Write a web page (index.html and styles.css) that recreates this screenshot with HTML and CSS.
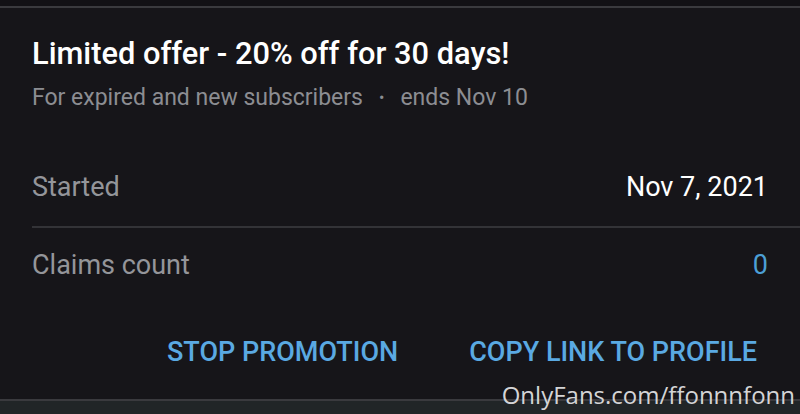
FILE: index.html
```html
<!DOCTYPE html>
<html>
<head>
<meta charset="utf-8">
<link rel="stylesheet" href="styles.css">
</head>
<body>
<div class="page">
  <div class="topband"></div>
  <div class="card">
    <div class="header">
      <h1 class="title">Limited offer - 20% off for 30 days!</h1>
      <div class="subtitle"><span>For expired and new subscribers</span><span class="dot">•</span><span>ends Nov 10</span></div>
    </div>
    <div class="row first">
      <span class="label">Started</span>
      <span class="value">Nov 7, 2021</span>
    </div>
    <div class="row">
      <span class="label">Claims count</span>
      <span class="value link">0</span>
    </div>
    <div class="actions">
      <span class="btn">STOP PROMOTION</span>
      <span class="btn">COPY LINK TO PROFILE</span>
    </div>
  </div>
  <div class="bottomband"></div>
  <div class="watermark">OnlyFans.com/ffonnnfonn</div>
</div>
</body>
</html>
```
FILE: styles.css
```css
html, body {
  margin: 0;
  padding: 0;
  background: #161519;
}
.page {
  position: relative;
  width: 800px;
  height: 414px;
  overflow: hidden;
  display: flex;
  flex-direction: column;
  font-family: Roboto, "Liberation Sans", sans-serif;
}
.topband {
  height: 6px;
  background: #121115;
  border-bottom: 2px solid #3a3a3e;
  flex: none;
}
.card {
  flex: 1;
  background: #161519;
  display: flex;
  flex-direction: column;
  padding-left: 32px;
}
.header {
  padding-top: 26px;
  padding-right: 32px;
}
.title {
  margin: 0;
  font-size: 30.8px;
  font-weight: 500;
  color: #ffffff;
  line-height: 40px;
}
.subtitle {
  margin-top: 9px;
  font-size: 23px;
  color: #8c8d92;
  line-height: 30px;
  display: flex;
  gap: 16px;
}
.subtitle .dot {
  font-size: 16px;
}
.row {
  display: flex;
  justify-content: space-between;
  padding: 21px 32px 23px 0;
  font-size: 27px;
  line-height: 32px;
}
.row.first {
  margin-top: 37px;
  border-bottom: 2px solid #333337;
}
.label {
  color: #94959a;
}
.value {
  color: #ffffff;
}
.value.link {
  color: #4c9fd6;
}
.actions {
  display: flex;
  justify-content: flex-end;
  gap: 71px;
  padding-right: 43px;
  margin-top: 32px;
  line-height: 32px;
}
.btn {
  color: #5aa9e2;
  font-size: 27px;
  font-weight: 500;
}
.bottomband {
  height: 13px;
  flex: none;
  background: #212527;
  border-top: 2px solid #3a3a3e;
}
.watermark {
  position: absolute;
  right: 5px;
  bottom: 3px;
  font-family: "Open Sans", sans-serif;
  font-size: 24px;
  color: #d4d4d6;
}
```
